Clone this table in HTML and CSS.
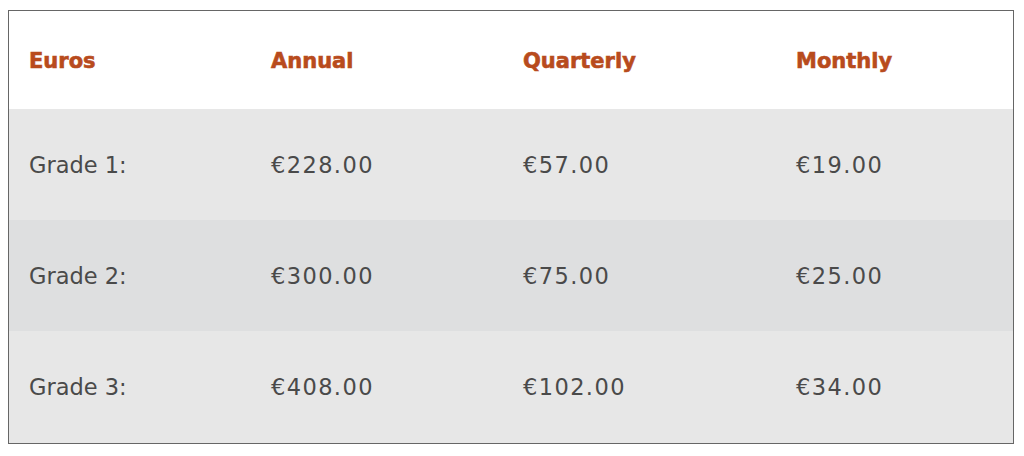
FILE: index.html
```html
<!DOCTYPE html>
<html>
<head>
<meta charset="utf-8">
<link rel="stylesheet" href="styles.css">
</head>
<body>
<div class="table">
  <div class="row head">
    <div class="cell">Euros</div>
    <div class="cell">Annual</div>
    <div class="cell">Quarterly</div>
    <div class="cell">Monthly</div>
  </div>
  <div class="row odd">
    <div class="cell">Grade 1:</div>
    <div class="cell amt">€228.00</div>
    <div class="cell amt">€57.00</div>
    <div class="cell amt">€19.00</div>
  </div>
  <div class="row even">
    <div class="cell">Grade 2:</div>
    <div class="cell amt">€300.00</div>
    <div class="cell amt">€75.00</div>
    <div class="cell amt">€25.00</div>
  </div>
  <div class="row odd">
    <div class="cell">Grade 3:</div>
    <div class="cell amt">€408.00</div>
    <div class="cell amt">€102.00</div>
    <div class="cell amt">€34.00</div>
  </div>
</div>
</body>
</html>
```
FILE: styles.css
```css
html, body {
  background: #ffffff;
}
body {
  margin: 10px 10px 0 8px;
}
.table {
  width: 1006px;
  box-sizing: border-box;
  border: 1px solid #666666;
  background: #ffffff;
}
.row {
  display: grid;
  grid-template-columns: 242px 252px 273px 1fr;
  align-items: center;
  height: 111px;
}
.row.head {
  height: 98px;
  padding-top: 2px;
  box-sizing: border-box;
}
.row:last-child {
  height: 112px;
}
.cell {
  padding-left: 20px;
  font-family: "DejaVu Sans", sans-serif;
  font-size: 22.5px;
  color: #4a4a4a;
}
.amt {
  letter-spacing: 1.4px;
}
.head .cell {
  font-weight: bold;
  font-size: 21px;
  color: #b84b1d;
  -webkit-text-stroke: 0.6px #b84b1d;
}
.odd {
  background: #e7e7e7;
}
.even {
  background: #dedfe0;
}
```
